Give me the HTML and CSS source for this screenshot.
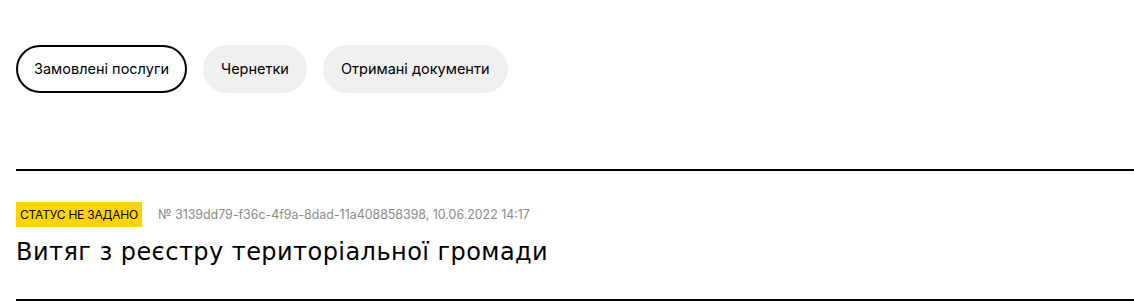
FILE: index.html
```html
<!DOCTYPE html>
<html lang="uk">
<head>
<meta charset="utf-8">
<link rel="stylesheet" href="styles.css">
</head>
<body>
<div class="page">
  <nav class="tabs">
    <button class="tab tab-active">Замовлені послуги</button>
    <button class="tab">Чернетки</button>
    <button class="tab">Отримані документи</button>
  </nav>
  <ul class="list">
    <li class="item">
      <div class="meta">
        <span class="status">Статус не задано</span>
        <span class="id">№ 3139dd79-f36c-4f9a-8dad-11a408858398, 10.06.2022 14:17</span>
      </div>
      <h2 class="title">Витяг з реєстру територіальної громади</h2>
    </li>
  </ul>
</div>
</body>
</html>
```
FILE: styles.css
```css
* { box-sizing: border-box; }
html, body { margin: 0; padding: 0; background: #fff; }
body { font-family: Inter, "Noto Sans", sans-serif; color: #000; }
.page { padding: 45px 0 0 16px; }
.tabs { display: flex; gap: 16px; }
.tab {
  font-family: inherit;
  font-size: 14.5px;
  height: 48px;
  padding: 0 16px;
  border: 2px solid transparent;
  border-radius: 24px;
  background: #f0f0f0;
  color: #000;
  line-height: 1;
}
.tab-active { border-color: #000; background: #fff; }
.list { list-style: none; margin: 76px 0 0; padding: 0; border-top: 2px solid #000; }
.item { padding: 31px 0 0; height: 130px; border-bottom: 2px solid #000; }
.meta { display: flex; align-items: center; gap: 16px; }
.status {
  background: #ffd500;
  font-size: 12px;
  letter-spacing: -0.2px;
  text-transform: uppercase;
  height: 25px;
  line-height: 25px;
  padding: 0 4px;
}
.id { font-size: 12.4px; color: #8c8c8c; }
.title {
  margin: 9px 0 0;
  font-family: "DejaVu Sans", Inter, sans-serif;
  font-size: 24px;
  letter-spacing: 0.45px;
  font-weight: 400;
  line-height: 32px;
}
```
